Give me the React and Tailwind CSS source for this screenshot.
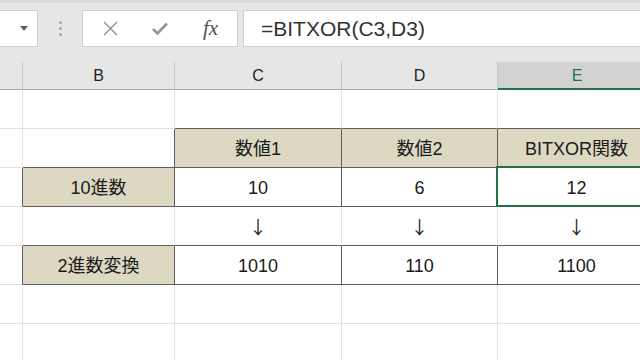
import React from 'react';

const L = '#e1e1e1';
const D = '#5e5e5e';

export default function App() {
  const beige = 'bg-[#dcd8c1]';
  const rows = [
    // A, B, C, D, E: [right, bottom, bg, text, kind]
    [[L, L], [L, L], [L, D], [L, D], [L, D]],
    [[L, L], [D, D], [D, D, beige, '数値1'], [D, D, beige, '数値2'], [D, D, beige, 'BITXOR関数']],
    [[D, L], [D, D, beige, '10進数'], [D, D, null, '10'], [D, D, null, '6'], [D, D, null, '12', 'sel']],
    [[L, L], [L, D], [L, D, null, '↓', 'arrow'], [L, D, null, '↓', 'arrow'], [L, D, null, '↓', 'arrow']],
    [[D, L], [D, D, beige, '2進数変換'], [D, D, null, '1010'], [D, D, null, '110'], [D, D, null, '1100']],
    [[L, L], [L, L], [L, L], [L, L], [L, L]],
    [[L, L], [L, L], [L, L], [L, L], [L, L]],
  ];

  return (
    <div
      className="w-[640px] h-[360px] overflow-hidden bg-white text-[#1a1a1a]"
      style={{ fontFamily: '"Liberation Sans", "Noto Sans CJK JP", sans-serif' }}
    >
      {/* formula bar */}
      <div className="h-[62px] bg-[#e6e6e6] border-t-[3px] border-[#d9d9d9]">
        <div className="flex items-center pt-[7px] h-[44px]">
          <div className="w-[38px] h-[37px] bg-white border border-l-0 border-[#d0d0d0] flex items-center justify-end pr-[9px]">
            <svg width="8" height="5" viewBox="0 0 8 5">
              <path d="M0 0H8L4 5Z" fill="#5c5c5c" />
            </svg>
          </div>
          <div className="w-[44px] flex flex-col items-center gap-[3px]">
            <span className="w-[3px] h-[3px] rounded-full bg-[#a6a6a6]" />
            <span className="w-[3px] h-[3px] rounded-full bg-[#a6a6a6]" />
            <span className="w-[3px] h-[3px] rounded-full bg-[#a6a6a6]" />
          </div>
          <div className="w-[156px] h-[37px] bg-white border border-[#d0d0d0] flex items-center">
            <svg className="ml-[20px]" width="15" height="15" viewBox="0 0 15 15">
              <path d="M1 1L14 14M14 1L1 14" stroke="#8f8f8f" strokeWidth="1.4" fill="none" />
            </svg>
            <svg className="ml-[34px]" width="16" height="13" viewBox="0 0 16 13">
              <path d="M1 7L5.5 11.5L15 1.5" stroke="#959595" strokeWidth="2.6" fill="none" />
            </svg>
            <span
              className="ml-[35px] text-[21px] italic text-[#505050] leading-none"
              style={{ fontFamily: '"Liberation Serif", serif' }}
            >
              fx
            </span>
          </div>
          <div className="flex-1 ml-[5px] h-[37px] bg-white border border-r-0 border-[#d0d0d0] flex items-center pl-[17px] text-[21px] text-[#333333]">
            =BITXOR(C3,D3)
          </div>
        </div>
      </div>

      {/* sheet */}
      <div className="grid grid-cols-[23px_152px_167px_156px_158px]">
        {['', 'B', 'C', 'D', 'E'].map((h, i) => (
          <div
            key={h + i}
            className={`h-[28px] flex items-center justify-center text-[16px] ${
              i === 4
                ? 'bg-[#d2d2d2] text-[#217346] shadow-[inset_0_-2px_0_#217346]'
                : 'bg-[#e6e6e6] text-[#222222] border-b border-[#ababab]'
            } ${i < 4 ? 'border-r border-r-[#c6c6c6]' : ''}`}
          >
            {h}
          </div>
        ))}
        {rows.map((row, r) =>
          row.map(([right, bottom, bg, text, kind], i) => (
            <div
              key={`${r}-${i}`}
              className={`relative h-[39px] flex items-center justify-center border-r border-b ${bg || 'bg-white'} text-[18px] ${
                kind === 'arrow' ? 'pt-[1px]' : 'pt-[3px]'
              }`}
              style={{ borderRightColor: right, borderBottomColor: bottom }}
            >
              {kind === 'arrow' ? (
                <span style={{ fontFamily: '"Noto Sans CJK JP", sans-serif' }}>{text}</span>
              ) : (
                text
              )}
              {kind === 'sel' && (
                <div className="absolute left-[-2px] top-[-2px] right-[-1px] bottom-[-1px] border-2 border-[#217346]" />
              )}
            </div>
          ))
        )}
      </div>
    </div>
  );
}
